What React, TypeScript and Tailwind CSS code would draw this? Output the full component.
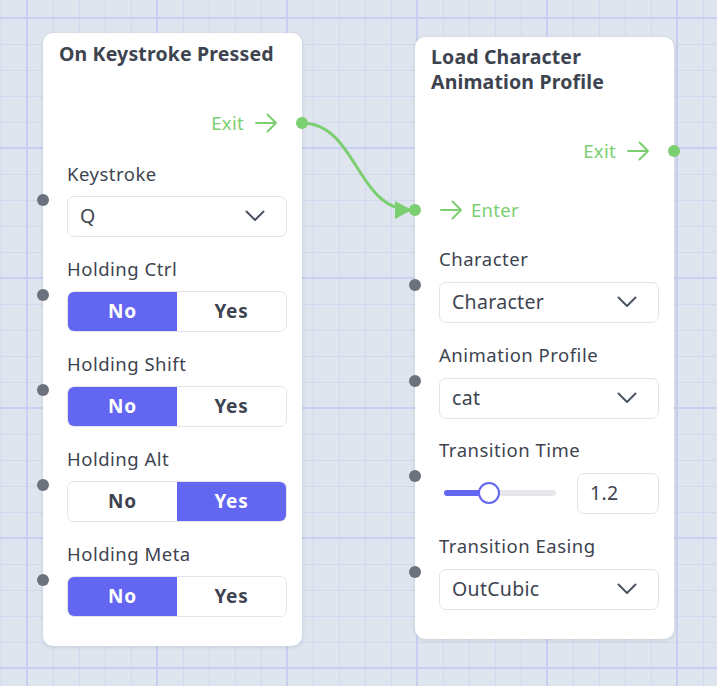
import React from 'react';

const ink = 'text-[#3d4450]';

function ArrowRight() {
  return (
    <svg width="24" height="20" viewBox="0 0 24 20" fill="none" stroke="currentColor" strokeWidth="2" strokeLinecap="round" strokeLinejoin="round">
      <path d="M2 10h20M13.5 1.5 22 10l-8.5 8.5" />
    </svg>
  );
}

function Chevron() {
  return (
    <svg width="20" height="12" viewBox="0 0 20 12" fill="none" stroke="#4b5563" strokeWidth="2" strokeLinecap="round" strokeLinejoin="round">
      <path d="M1.5 1.5 10 10l8.5-8.5" />
    </svg>
  );
}

function OutRow({ className }: { className: string }) {
  return (
    <div className={`relative h-6 flex items-center justify-end gap-[10px] pr-6 text-[18.5px] tracking-[0.3px] text-[#7ccf70] ${className}`}>
      <span>Exit</span>
      <ArrowRight />
      <span className="absolute right-[-6px] top-1/2 -translate-y-1/2 w-3 h-3 rounded-full bg-[#7ccf70]" />
    </div>
  );
}

function InRow({ className }: { className: string }) {
  return (
    <div className={`relative h-6 flex items-center gap-[8px] pl-6 text-[18.5px] tracking-[0.3px] text-[#7ccf70] ${className}`}>
      <ArrowRight />
      <span>Enter</span>
      <span className="absolute left-[-6px] top-1/2 -translate-y-1/2 w-3 h-3 rounded-full bg-[#7ccf70]" />
    </div>
  );
}

function Field({ label, className, children }: { label: string; className: string; children: React.ReactNode }) {
  return (
    <div className={`relative pl-6 pr-[15px] ${className}`}>
      <span className="absolute left-[-6px] top-[32px] w-3 h-3 rounded-full bg-[#6c727d]" />
      <div className={`text-[18.5px] leading-6 tracking-[0.5px] ${ink}`}>{label}</div>
      {children}
    </div>
  );
}

function Select({ value, className }: { value: string; className: string }) {
  return (
    <div className={`h-[41px] flex items-center justify-between pl-3 pr-[21px] rounded-[7px] border border-[#e2e4e9] bg-white text-[19.5px] tracking-[0.3px] ${ink} ${className}`}>
      <span>{value}</span>
      <Chevron />
    </div>
  );
}

function Toggle({ yes }: { yes: boolean }) {
  const on = 'bg-[#6366f1] text-white';
  const off = 'bg-white text-[#3d4450]';
  return (
    <div className="mt-[10px] h-[41px] flex rounded-[7px] border border-[#e2e4e9] overflow-hidden text-[19px] tracking-[0.8px] font-bold">
      <div className={`flex-1 flex items-center justify-center ${yes ? off : on}`}>No</div>
      <div className={`flex-1 flex items-center justify-center ${yes ? on : off}`}>Yes</div>
    </div>
  );
}

export default function App() {
  return (
    <div className="relative w-[717px] h-[686px] overflow-hidden bg-[#dfe5ee] font-['Noto_Sans',sans-serif] [background-image:linear-gradient(to_right,#c9cff0_2px,transparent_2px),linear-gradient(to_bottom,#c9cff0_2px,transparent_2px),linear-gradient(to_right,#d2d8f0_1px,transparent_1px),linear-gradient(to_bottom,#d2d8f0_1px,transparent_1px)] [background-size:130px_130px,130px_130px,26px_26px,26px_26px] [background-position:26px_17px,26px_17px,1px_18px,1px_18px]">
      {/* edge between the two nodes */}
      <svg className="absolute inset-0 pointer-events-none" width="717" height="686">
        <path d="M302 123C356.5 123 356.5 210 411 210" fill="none" stroke="#7ccf70" strokeWidth="3" />
        <polygon points="395,201 412,210 395,219" fill="#7ccf70" />
      </svg>

      {/* On Keystroke Pressed */}
      <div className="absolute left-[43px] top-[33px] w-[259px] rounded-[10px] bg-white shadow-[0_1px_4px_rgba(15,23,42,0.12)] pt-[7.5px] pb-[29px]">
        <div className={`px-4 text-[19.5px] leading-[25px] tracking-[0.15px] font-bold whitespace-nowrap ${ink}`}>On Keystroke Pressed</div>
        <OutRow className="mt-[45px]" />
        <Field label="Keystroke" className="mt-[27px]">
          <Select value="Q" className="mt-[10px]" />
        </Field>
        <Field label="Holding Ctrl" className="mt-[20px]">
          <Toggle yes={false} />
        </Field>
        <Field label="Holding Shift" className="mt-[20px]">
          <Toggle yes={false} />
        </Field>
        <Field label="Holding Alt" className="mt-[20px]">
          <Toggle yes={true} />
        </Field>
        <Field label="Holding Meta" className="mt-[20px]">
          <Toggle yes={false} />
        </Field>
      </div>

      {/* Load Character Animation Profile */}
      <div className="absolute left-[415px] top-[37px] w-[259px] rounded-[10px] bg-white shadow-[0_1px_4px_rgba(15,23,42,0.12)] pt-[6.5px] pb-[29px]">
        <div className={`px-4 text-[19.5px] leading-[25px] tracking-[0.15px] font-bold whitespace-nowrap ${ink}`}>
          Load Character
          <br />
          Animation Profile
        </div>
        <OutRow className="mt-[45px]" />
        <InRow className="mt-[35px]" />
        <Field label="Character" className="mt-[25px]">
          <Select value="Character" className="mt-[11px]" />
        </Field>
        <Field label="Animation Profile" className="mt-[20px]">
          <Select value="cat" className="mt-[11px]" />
        </Field>
        <Field label="Transition Time" className="mt-[19px]">
          <div className="mt-[11px] flex items-center gap-[21px]">
            <div className="relative ml-[5px] w-[112px] h-[6px] rounded-full bg-[#e5e7eb]">
              <div className="h-full w-[45px] rounded-full bg-[#6366f1]" />
              <div className="absolute left-[34px] top-1/2 -translate-y-1/2 w-[22px] h-[22px] rounded-full border-2 border-[#6366f1] bg-white" />
            </div>
            <div className={`w-[82px] h-[41px] flex items-center px-3 rounded-[7px] border border-[#e2e4e9] text-[19.5px] tracking-[0.3px] ${ink}`}>1.2</div>
          </div>
        </Field>
        <Field label="Transition Easing" className="mt-[20px]">
          <Select value="OutCubic" className="mt-[11px]" />
        </Field>
      </div>
    </div>
  );
}
